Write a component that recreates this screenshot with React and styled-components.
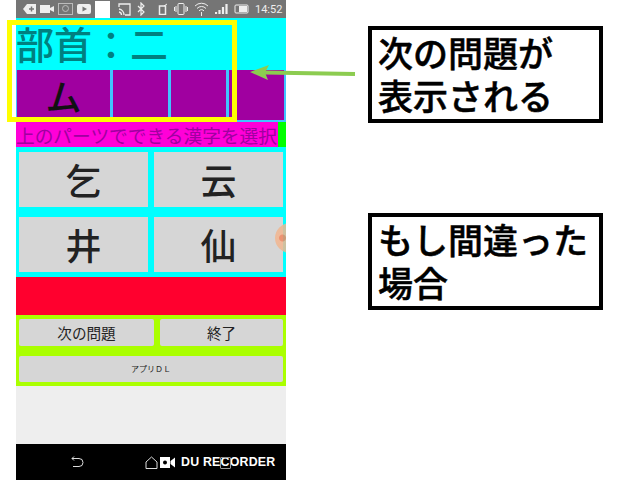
import styled, { createGlobalStyle } from 'styled-components'

const Global = createGlobalStyle`
    html, body {
        margin: 0;
        background: #fff;
    }
    body {
        font-family: "Noto Sans CJK JP", "Noto Sans", sans-serif;
    }
`

const Page = styled.div`
    position: relative;
    width: 640px;
    height: 480px;
    overflow: hidden;
    display: flex;
    padding-left: 16px;
    box-sizing: border-box;
`

const Phone = styled.div`
    position: relative;
    width: 270px;
    height: 480px;
    display: flex;
    flex-direction: column;
    background: #eee;
    overflow: hidden;
`

const StatusBar = styled.div`
    height: 18px;
    background: #757575;
    display: flex;
    align-items: center;
    padding: 0 6px 0 7px;
    color: #eee;
`

const StatusLeft = styled.div`
    display: flex;
    align-items: center;
    gap: 4px;
`

const StatusRight = styled.div`
    display: flex;
    align-items: center;
    gap: 6px;
    margin-left: 8px;
`

const Clock = styled.span`
    font-family: "Roboto", sans-serif;
    font-size: 11px;
`

const WhiteTile = styled.div`
    width: 15px;
    height: 17px;
    background: #fff;
`

const Header = styled.div`
    background: #00ffff;
    height: 104px;
    display: flex;
    flex-direction: column;
`

const Title = styled.div`
    height: 52px;
    line-height: 50px;
    font-size: 38px;
    font-weight: 500;
    color: #008080;
    white-space: nowrap;
`

const Parts = styled.div`
    height: 52px;
    display: grid;
    grid-template-columns: 93px 55px 55px 55px;
    gap: 3px;
    padding: 0 2px 2px 1px;
    background: #40c4ff;
    box-sizing: border-box;
`

const Part = styled.div`
    background: #a000a0;
    color: #111;
    font-size: 36px;
    font-weight: 500;
    line-height: 44px;
    padding-top: 3px;
    text-align: center;
    overflow: hidden;
`

const LabelRow = styled.div`
    height: 25px;
    background: #00ff00;
    display: flex;
`

const Label = styled.div`
    width: 262px;
    background: #ff00d8;
    color: #a000a0;
    font-size: 18.7px;
    line-height: 25px;
    white-space: nowrap;
    overflow: hidden;
`

const Answers = styled.div`
    height: 130px;
    background: #00ffff;
    box-sizing: border-box;
    padding: 5px 3px;
    display: grid;
    grid-template-columns: 129px 129px;
    grid-template-rows: 55px 55px;
    justify-content: space-between;
    align-content: space-between;
`

const Answer = styled.div`
    background: #d6d6d6;
    color: #222;
    font-size: 36px;
    font-weight: 500;
    line-height: 55px;
    text-align: center;
`

const RedBand = styled.div`
    height: 38px;
    background: #ff002e;
`

const Controls = styled.div`
    height: 71px;
    background: #aaff00;
    box-sizing: border-box;
    padding: 4px 3px;
    display: grid;
    grid-template-columns: 135px 123px;
    grid-template-rows: 27px 26px;
    justify-content: space-between;
    align-content: space-between;
`

const Control = styled.div`
    background: #d6d6d6;
    color: #222;
    border-radius: 2px;
    text-align: center;
    font-size: ${(props) => (props.small ? '8px' : '14.6px')};
    line-height: ${(props) => (props.small ? '26px' : '27px')};
    grid-column: ${(props) => (props.small ? '1 / 3' : 'auto')};
`

const Blank = styled.div`
    flex: 1;
    background: #eee;
`

const NavBar = styled.div`
    height: 36px;
    background: #000;
    display: flex;
    align-items: center;
    color: #fff;
    padding-left: 54px;
`

const Watermark = styled.span`
    font-family: "Liberation Sans", sans-serif;
    font-weight: bold;
    font-size: 12.4px;
    letter-spacing: 0.2px;
    margin-left: 6px;
    white-space: nowrap;
`

const RecentSquare = styled.div`
    position: absolute;
    left: 220px;
    top: 457px;
    width: 9px;
    height: 10px;
    border: 1px solid #999;
    border-radius: 1px;
`

const Highlight = styled.div`
    position: absolute;
    left: 7px;
    top: 20px;
    width: 230px;
    height: 102px;
    box-sizing: border-box;
    border: 5px solid #ffff00;
`

const TouchDot = styled.div`
    position: absolute;
    left: 259px;
    top: 223px;
    width: 30px;
    height: 30px;
    border-radius: 50%;
    background: radial-gradient(circle at 25% 50%, #f08860 0 3px, #f5b58f 4px, #e8b890 60%, #94c49a 80%);
    opacity: 0.85;
`

const Arrow = styled.svg`
    position: absolute;
    left: 245px;
    top: 60px;
`

const Notes = styled.div`
    margin-left: 82px;
    padding-top: 26px;
    display: flex;
    flex-direction: column;
    gap: 90px;
`

const Note = styled.div`
    width: 235px;
    height: 97px;
    box-sizing: border-box;
    border: 4px solid #000;
    padding: 0 6px;
    font-size: 35px;
    font-weight: 500;
    -webkit-text-stroke: 0.5px #000;
    line-height: 43px;
    color: #000;
    background: #fff;
`

const Glyph = ({ w = 14, h = 12, children, ...rest }) => (
    <svg width={w} height={h} viewBox={`0 0 ${w} ${h}`} fill="none" stroke="currentColor" {...rest}>
        {children}
    </svg>
)

export default function App() {
    return (
        <Page>
            <Global />
            <Phone>
                <StatusBar>
                    <StatusLeft>
                        <Glyph w={13} h={10}>
                            <path d="M0 5 L4 0 H13 V10 H4 Z" fill="#eee" stroke="none" />
                            <path d="M6 5 H11 M8.5 2.5 V7.5" stroke="#757575" strokeWidth="1.5" />
                        </Glyph>
                        <Glyph w={14} h={10}>
                            <path d="M0 1 H10 V9 H0 Z M10 4 L14 2 V8 L10 6 Z" fill="#eee" stroke="none" />
                        </Glyph>
                        <Glyph w={15} h={14} stroke="#bbb">
                            <rect x="0.5" y="1.5" width="14" height="11" />
                            <circle cx="7.5" cy="6.5" r="3" />
                        </Glyph>
                        <Glyph w={14} h={10}>
                            <rect width="14" height="10" rx="2" fill="#eee" stroke="none" />
                            <path d="M5.5 2.5 L10 5 L5.5 7.5 Z" fill="#757575" stroke="none" />
                        </Glyph>
                        <WhiteTile />
                    </StatusLeft>
                    <StatusRight>
                        <Glyph w={13} h={13}>
                            <path d="M1 4 V1 H12 V12 H7" strokeWidth="1.3" />
                            <path d="M1 6 A6 6 0 0 1 6 12 M1 9 A3 3 0 0 1 3.5 12" strokeWidth="1.3" />
                        </Glyph>
                        <Glyph w={8} h={14}>
                            <path d="M1 4 L7 10 L4 13 V1 L7 4 L1 10" strokeWidth="1.2" />
                        </Glyph>
                        <Glyph w={10} h={12} style={{ marginLeft: 7 }}>
                            <rect x="1.5" y="3" width="6" height="8.5" strokeWidth="1.5" />
                            <path d="M6 3 L9 1" strokeWidth="1" />
                        </Glyph>
                        <Glyph w={14} h={12}>
                            <rect x="4" y="0.5" width="6" height="11" rx="1" />
                            <path d="M2 3 V9 M12 3 V9 M0.5 4 V8 M13.5 4 V8" />
                        </Glyph>
                        <Glyph w={15} h={14}>
                            <path d="M1 4 A9 9 0 0 1 14 4 M3 6.5 A6 6 0 0 1 12 6.5 M5 9 A3 3 0 0 1 10 9" />
                            <path d="M7.5 10 V14" />
                        </Glyph>
                        <Glyph w={13} h={10}>
                            <path d="M1 10 V8 M4.5 10 V6 M8 10 V3 M11.5 10 V0" strokeWidth="2.2" />
                        </Glyph>
                        <Glyph w={15} h={10}>
                            <rect x="1" y="1" width="13" height="8" rx="1" />
                            <rect x="5" y="2" width="8" height="6" fill="currentColor" stroke="none" />
                        </Glyph>
                        <Clock>14:52</Clock>
                    </StatusRight>
                </StatusBar>
                <Header>
                    <Title>{'部首\uFF1A二'}</Title>
                    <Parts>
                        <Part>ム</Part>
                        <Part />
                        <Part />
                        <Part />
                    </Parts>
                </Header>
                <LabelRow>
                    <Label>上のパーツでできる漢字を選択</Label>
                </LabelRow>
                <Answers>
                    <Answer>乞</Answer>
                    <Answer>云</Answer>
                    <Answer>井</Answer>
                    <Answer>仙</Answer>
                </Answers>
                <RedBand />
                <Controls>
                    <Control>次の問題</Control>
                    <Control>終了</Control>
                    <Control small>{'アプリ\uFF24\uFF2C'}</Control>
                </Controls>
                <Blank />
                <NavBar>
                    <Glyph w={14} h={12} stroke="#ddd">
                        <path d="M2 2.5 H9 A4 4 0 0 1 9 10.5 H3 M4 0.5 L2 2.5 L4 4.5" />
                    </Glyph>
                    <Glyph w={13} h={13} stroke="#ddd" style={{ marginLeft: 61 }}>
                        <path d="M1 12.5 H12 V6 L6.5 1 L1 6 Z" />
                    </Glyph>
                    <Glyph w={15} h={11} style={{ marginLeft: 2 }}>
                        <path d="M0 0 H10 V11 H0 Z M10.5 4 L15 0.5 V10.5 L10.5 7 Z" fill="#fff" stroke="none" />
                        <circle cx="5" cy="5.5" r="2" fill="#000" stroke="none" />
                    </Glyph>
                    <Watermark>DU RECORDER</Watermark>
                </NavBar>
                <TouchDot />
            </Phone>
            <Notes>
                <Note>次の問題が<br />表示される</Note>
                <Note>もし間違った<br />場合</Note>
            </Notes>
            <Highlight />
            <RecentSquare />
            <Arrow width="115" height="24" viewBox="0 0 115 24">
                <path d="M110 14 L20 12.5" stroke="#8ccc50" strokeWidth="4" />
                <path d="M5 12 L24 5 L20 12.5 L23 20 Z" fill="#8ccc50" />
            </Arrow>
        </Page>
    )
}
